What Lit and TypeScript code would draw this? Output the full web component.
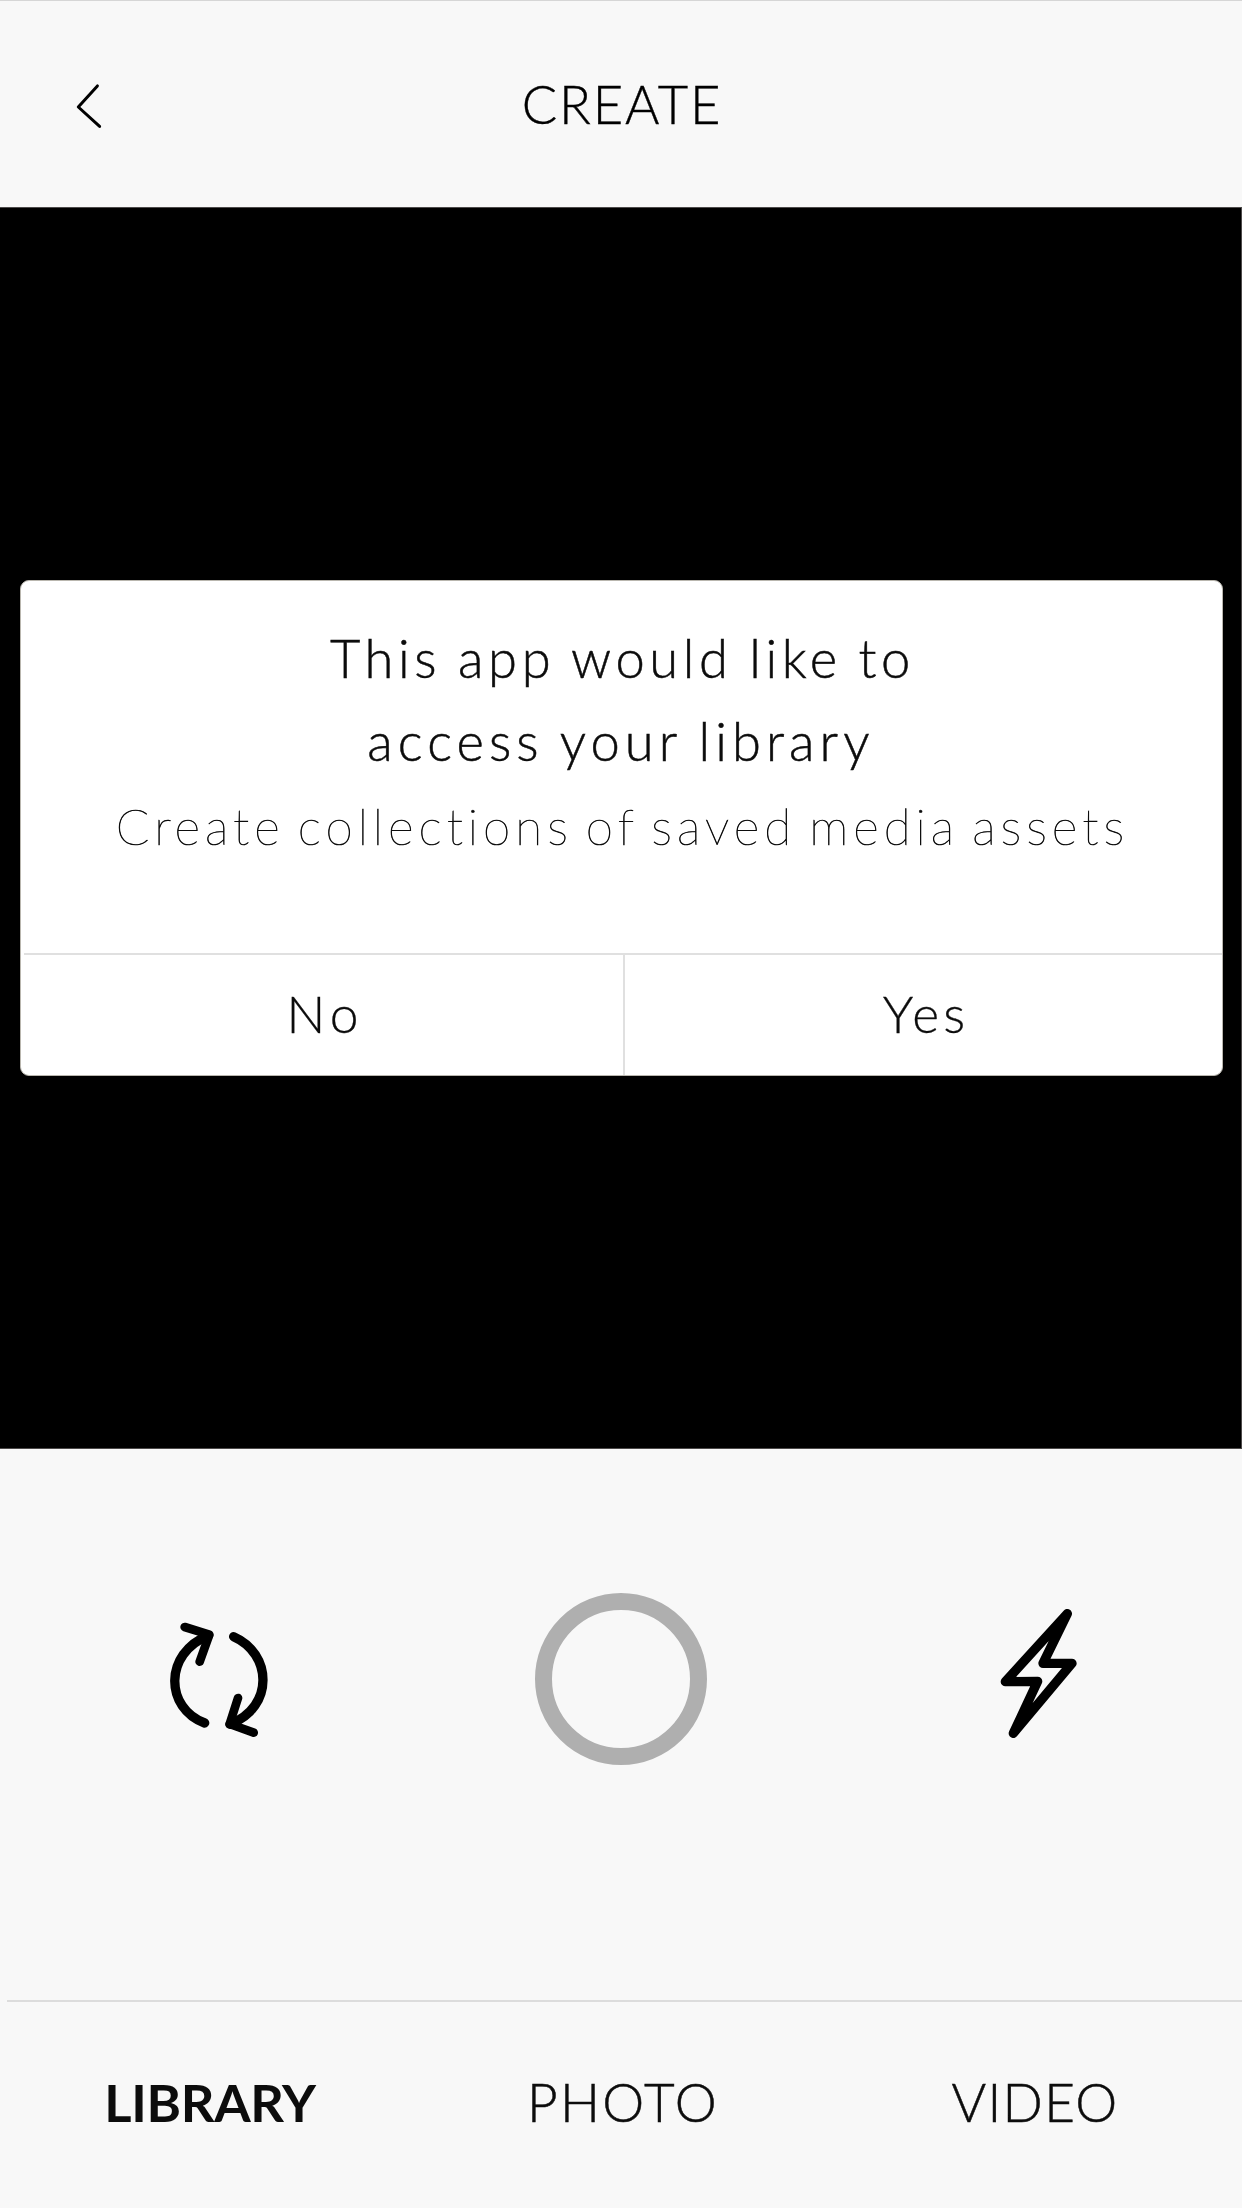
import { LitElement, html, css } from "lit";
import { customElement, state } from "lit/decorators.js";

const TABS = ["LIBRARY", "PHOTO", "VIDEO"];

@customElement("permission-dialog")
export class PermissionDialog extends LitElement {
  static styles = css`
    :host {
      display: flex;
      flex-direction: column;
      box-sizing: border-box;
      height: 496px;
      background: #fff;
      border: 1px solid #b9b6ae;
      border-radius: 9px;
      overflow: hidden;
      color: #0c0c0c;
      text-align: center;
      white-space: nowrap;
    }
    .body {
      flex: 1;
      padding-top: 35px;
    }
    .title {
      margin: 0;
      font-size: 52.5px;
      font-weight: 300;
      line-height: 83px;
      -webkit-text-stroke: 0.5px #0c0c0c;
    }
    .line {
      display: block;
    }
    .first {
      letter-spacing: 4.6px;
      word-spacing: -2px;
      padding-left: 2px;
    }
    .second {
      letter-spacing: 5.07px;
      word-spacing: -2px;
      padding-right: 1px;
    }
    .note {
      margin: 0;
      font-size: 49.5px;
      font-weight: 100;
      line-height: 88px;
      letter-spacing: 4.95px;
      word-spacing: -6px;
      padding-left: 2px;
      -webkit-text-stroke: 0.65px #0c0c0c;
    }
    .actions {
      display: grid;
      grid-template-columns: 601px 1fr;
      height: 120px;
      margin-left: 3px;
      border-top: 2px solid #e0e0e0;
    }
    .action {
      font: inherit;
      font-size: 51.5px;
      font-weight: 300;
      color: inherit;
      background: none;
      border: 0;
      margin: 0;
      padding: 0 0 4px 5px;
      letter-spacing: 4.2px;
      -webkit-text-stroke: 0.3px #0c0c0c;
    }
    .no {
      letter-spacing: 5px;
      border-right: 2px solid #e0e0e0;
      padding-left: 3px;
    }
  `;

  render() {
    return html`
      <div class="body">
        <h2 class="title">
          <span class="line first">This app would like to</span>
          <span class="line second">access your library</span>
        </h2>
        <p class="note">Create collections of saved media assets</p>
      </div>
      <div class="actions">
        <button class="action no">No</button>
        <button class="action">Yes</button>
      </div>
    `;
  }
}

@customElement("app-root")
export class AppRoot extends LitElement {
  @state() private active = "LIBRARY";

  static styles = css`
    :host {
      display: flex;
      flex-direction: column;
      box-sizing: border-box;
      width: 1242px;
      height: 2208px;
      overflow: hidden;
      background: #f8f8f8;
      color: #0c0c0c;
      font-family: Lato, "Open Sans", sans-serif;
    }
    .header {
      display: grid;
      grid-template-columns: 200px 1fr 200px;
      align-items: center;
      box-sizing: border-box;
      height: 207px;
      border-top: 1px solid #d6d6d6;
    }
    .back {
      width: 40px;
      height: 60px;
      margin-left: 70px;
    }
    .heading {
      margin: 0;
      padding: 0 0 1px 2px;
      text-align: center;
      font-size: 52.5px;
      font-weight: 300;
      letter-spacing: 1.84px;
      color: #000;
      -webkit-text-stroke: 0.4px #000;
    }
    .viewfinder {
      box-sizing: border-box;
      height: 1242px;
      padding: 372px 18px 0 20px;
      background: #000;
      border: solid #4d4a4a;
      border-width: 1px 1px 1px 0;
    }
    .controls {
      display: grid;
      grid-template-columns: 160px 172px 160px;
      column-gap: 235px;
      align-items: start;
      box-sizing: border-box;
      height: 551px;
      padding: 131px 0 0 140px;
    }
    .flip {
      width: 160px;
      height: 180px;
      margin-top: 10px;
      filter: blur(0.7px);
    }
    .shutter {
      box-sizing: border-box;
      width: 172px;
      height: 172px;
      margin-top: 13px;
      padding: 0;
      border: 17px solid #afafaf;
      border-radius: 50%;
      background: none;
    }
    .flash {
      width: 160px;
      height: 190px;
      margin-left: 18px;
      filter: blur(0.7px);
    }
    .rule {
      height: 2px;
      margin-left: 7px;
      background: #dcdcdc;
    }
    .tabs {
      display: grid;
      grid-template-columns: repeat(3, 1fr);
      flex: 1;
    }
    .tab {
      font: inherit;
      font-size: 53px;
      font-weight: 300;
      letter-spacing: 2.2px;
      color: inherit;
      background: none;
      border: 0;
      margin: 0;
      padding: 0 0 7px 4px;
      -webkit-text-stroke: 0.5px #0c0c0c;
    }
    .tab:last-child {
      letter-spacing: 1.3px;
      padding-left: 0;
    }
    .tab.active {
      font-size: 52.5px;
      font-weight: 700;
      letter-spacing: -0.33px;
      padding-left: 6px;
      -webkit-text-stroke: 0;
    }
  `;

  render() {
    return html`
      <header class="header">
        <svg class="back" viewBox="0 0 40 60" fill="none" stroke="#000" stroke-width="3" stroke-linecap="round" stroke-linejoin="round">
          <path d="M27.4 11.9 L8.3 33 L29.6 52.4" />
        </svg>
        <h1 class="heading">CREATE</h1>
      </header>
      <main class="viewfinder">
        <permission-dialog></permission-dialog>
      </main>
      <section class="controls">
        <svg class="flip" viewBox="0 0 480 540" fill="none" stroke="#000" stroke-width="28" stroke-linecap="round" stroke-linejoin="round">
          <path d="M194 399 C75 355 70 190 206 136" />
          <path d="M134 111 L208 134 L179 215" stroke-width="26" />
          <path d="M281 140 C395 190 405 350 270 403" />
          <path d="M294 324 L269 402 L341 428" stroke-width="26" />
        </svg>
        <button class="shutter" aria-label="Shutter"></button>
        <svg class="flash" viewBox="0 0 480 570" fill="none" stroke="#000" stroke-width="28" stroke-linecap="round" stroke-linejoin="round">
          <path d="M322 101 L136 305 L233 304 L160 460 L336 250 L249 250 Z" />
        </svg>
      </section>
      <div class="rule"></div>
      <nav class="tabs">
        ${TABS.map(
          (t) => html`<button
            class="tab ${t === this.active ? "active" : ""}"
            @click=${() => (this.active = t)}
          >${t}</button>`
        )}
      </nav>
    `;
  }
}
